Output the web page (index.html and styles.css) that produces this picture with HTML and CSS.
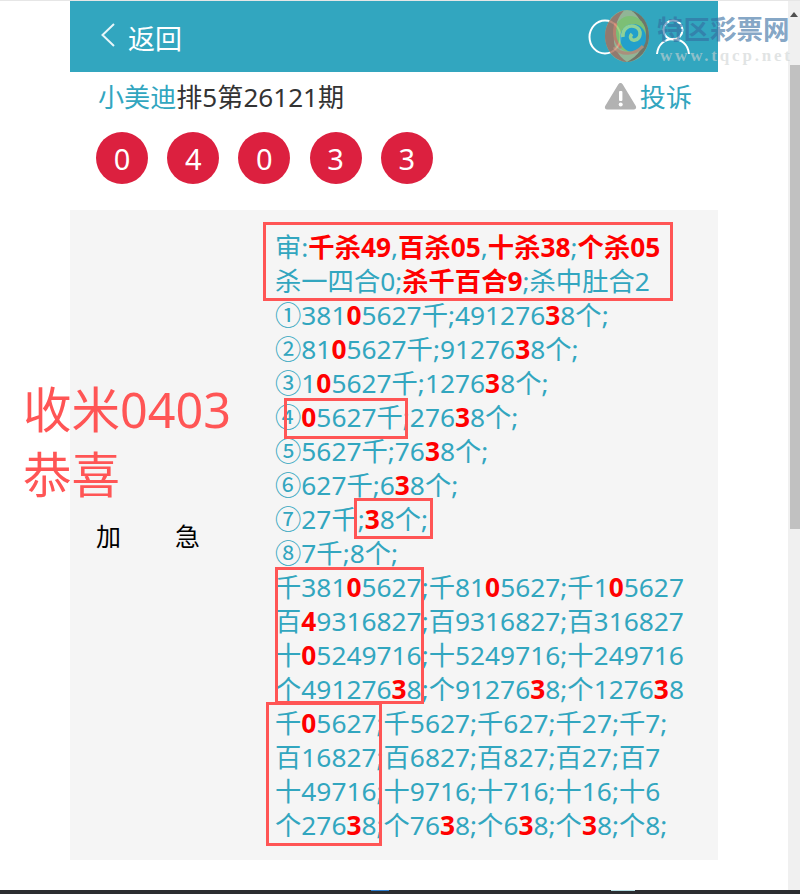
FILE: index.html
```html
<!DOCTYPE html>
<html lang="zh-CN">
<head>
    <meta charset="UTF-8">
    <meta name="viewport" content="width=device-width, initial-scale=1.0">
    <title>排5第26121期</title>
    <link rel="stylesheet" href="styles.css">
</head>
<body>
    <div class="top-line"></div>
    <div class="window">
        <div class="page">
            <div class="wrap">
                <header class="head">
                    <a class="back">
                        <svg class="back-icon" width="16" height="26" viewBox="0 0 16 26"><path d="M14 2 L2.500 13 L14 24" fill="none" stroke="#e8f6f9" stroke-width="2"/></svg>
                        <span class="back-text">返回</span>
                    </a>
                    <div class="head-icons">
                        <svg width="34" height="38" viewBox="0 0 34 38"><ellipse cx="17" cy="19" rx="15.500" ry="16.500" fill="none" stroke="#fff" stroke-width="2"/></svg>
                        <svg width="36" height="38" viewBox="0 0 36 38"><circle cx="18" cy="12" r="9.500" fill="none" stroke="#fff" stroke-width="2"/><path d="M2 36 C3 26 10 21 18 21 C26 21 33 26 34 36" fill="none" stroke="#fff" stroke-width="2"/></svg>
                    </div>
                </header>

                <div class="title-row">
                    <div class="title"><span class="author">小美迪</span>排5第26121期</div>
                    <a class="report">
                        <svg width="33" height="28" viewBox="0 0 33 28"><path d="M16.500 1 C17.500 1 18.300 1.600 18.800 2.500 L31.800 24 C32.800 25.800 31.600 27.500 29.800 27.500 L3.200 27.500 C1.400 27.500 .2 25.800 1.200 24 L14.200 2.500 C14.700 1.600 15.500 1 16.500 1 Z" fill="#b2b2b2"/><rect x="15" y="9" width="3.400" height="10" rx="1" fill="#fff"/><circle cx="16.700" cy="22.500" r="2" fill="#fff"/></svg>
                        投诉
                    </a>
                </div>

                <div class="balls">
                    <span class="ball">0</span>
                    <span class="ball">4</span>
                    <span class="ball">0</span>
                    <span class="ball">3</span>
                    <span class="ball">3</span>
                </div>

                <div class="post">
                    <div class="tag"><span>加</span><span>急</span></div>
                    <div class="lines">
                        <p>审:<b>千杀49</b>,<b>百杀05</b>,<b>十杀38</b>;<b>个杀05</b></p>
                        <p>杀一四合0;<b>杀千百合9</b>;杀中肚合2</p>
                        <p>①381<b>0</b>5627千;491276<b>3</b>8个;</p>
                        <p>②81<b>0</b>5627千;91276<b>3</b>8个;</p>
                        <p>③1<b>0</b>5627千;1276<b>3</b>8个;</p>
                        <p>④<b>0</b>5627千;276<b>3</b>8个;</p>
                        <p>⑤5627千;76<b>3</b>8个;</p>
                        <p>⑥627千;6<b>3</b>8个;</p>
                        <p>⑦27千;<b>3</b>8个;</p>
                        <p>⑧7千;8个;</p>
                        <p>千381<b>0</b>5627;千81<b>0</b>5627;千1<b>0</b>5627</p>
                        <p>百<b>4</b>9316827;百9316827;百316827</p>
                        <p>十<b>0</b>5249716;十5249716;十249716</p>
                        <p>个491276<b>3</b>8;个91276<b>3</b>8;个1276<b>3</b>8</p>
                        <p>千<b>0</b>5627;千5627;千627;千27;千7;</p>
                        <p>百16827;百6827;百827;百27;百7</p>
                        <p>十49716;十9716;十716;十16;十6</p>
                        <p>个276<b>3</b>8;个76<b>3</b>8;个6<b>3</b>8;个<b>3</b>8;个8;</p>
                    </div>
                </div>
            </div>

            <!-- stuff drawn on top of the screenshot -->
            <div class="note">收米0403<br>恭喜</div>
            <div class="mark mark-1"></div>
            <div class="mark mark-2"></div>
            <div class="mark mark-3"></div>
            <div class="mark mark-4"></div>
            <div class="mark mark-5"></div>

            <div class="watermark">
                <svg class="wm-logo" width="46" height="54" viewBox="0 0 46 54">
                    <ellipse cx="23" cy="27" rx="22" ry="26" fill="#a9b98c"/>
                    <path d="M27 1.500 C38 4 45 14 45 27 C45 41 35 52 23 53 C34 47 41 38 40 26 C39 14 34 6 27 1.500 Z" fill="#7e6a55"/>
                    <path d="M20 1.500 C9 4 1 15 1 27 C1 40 10 52 23 53 C13 46 9 37 10 27 C11 15 15 7 20 1.500 Z" fill="#a9705c"/>
                    <ellipse cx="26" cy="25" rx="16" ry="18" fill="#8fc663"/>
                    <ellipse cx="29" cy="29" rx="13" ry="14" fill="#1f9fd0"/>
                    <path d="M19 28 C18 19 26 15 32 18 C38 21 37 30 31 31 C27 32 25 28 28 25" fill="none" stroke="#a6dc8e" stroke-width="3.500"/>
                    <path d="M10 38 C17 47 31 46 39 37" fill="none" stroke="#c98a6c" stroke-width="3"/>
                    <path d="M12 14 C9 24 11 33 17 39" fill="none" stroke="#d8785c" stroke-width="3"/>
                </svg>
                <div class="wm-text">
                    <div class="wm-name">特区彩票网</div>
                    <div class="wm-url">www.tqcp.net</div>
                </div>
            </div>
        </div>

        <div class="scrollbar">
            <div class="scroll-arrow"></div>
            <div class="scroll-thumb"></div>
        </div>
    </div>
    <div class="taskbar">
        <span class="task task-blue"></span>
        <span class="task task-light"></span>
    </div>
</body>
</html>
```

FILE: styles.css
```css
* {
    box-sizing: border-box;
}
html, body {
    height: 100%;
}
body {
    margin: 0;
    display: flex;
    flex-direction: column;
    background-color: #fff;
    font-family: "Noto Sans", "Noto Sans CJK SC", sans-serif;
    overflow: hidden;
}
.top-line {
    height: 1px;
    background-color: #e6e6e6;
}
.window {
    flex: 1;
    display: flex;
    min-height: 0;
}
.page {
    flex: 1;
    position: relative;
}
.wrap {
    width: 648px;
    margin-left: 70px;
}

/* header */
.head {
    height: 71px;
    padding: 0 27px 0 30px;
    display: flex;
    justify-content: space-between;
    align-items: center;
    background-color: #32a6bf;
    color: #fff;
}
.back {
    display: flex;
    align-items: center;
    gap: 12px;
    font-size: 27px;
}
.back-icon {
    margin-top: -4px;
}
.back-text {
    margin-top: 2px;
}
.head-icons {
    display: flex;
    gap: 33px;
}

.title-row {
    height: 48px;
    padding: 0 26px 0 28px;
    display: flex;
    justify-content: space-between;
    align-items: center;
    font-size: 26.100px;
    color: #333;
}
.author {
    color: #32a6bf;
}
.report {
    display: flex;
    align-items: center;
    gap: 3px;
    color: #32a6bf;
}

.balls {
    margin-top: 12px;
    padding-left: 26px;
    display: flex;
    gap: 19.200px;
}
.ball {
    width: 52px;
    height: 52px;
    border-radius: 50%;
    display: flex;
    justify-content: center;
    align-items: center;
    background-color: #dc203f;
    color: #fff;
    font-size: 29px;
}

/* post body */
.post {
    margin-top: 26px;
    height: 650px;
    padding: 20px 0 18px;
    display: flex;
    align-items: center;
    background-color: #f5f5f5;
}
.tag {
    width: 205px;
    padding-left: 26px;
    display: flex;
    gap: 54px;
    font-size: 25px;
    line-height: 34px;
    color: #000;
}
.lines {
    flex: 1;
    font-size: 26.300px;
    line-height: 34px;
    color: #32a6bf;
    white-space: nowrap;
}
.lines p {
    margin: 0;
}
.lines b {
    color: #f00;
}

/* overlays */
.note {
    position: absolute;
    left: 23px;
    top: 376px;
    font-size: 48.500px;
    line-height: 65px;
    color: #f55;
}
.mark {
    position: absolute;
    border: 3px solid #f55;
}
.mark-1 {
    left: 263px;
    top: 221px;
    width: 410px;
    height: 79px;
}
.mark-2 {
    left: 284px;
    top: 397px;
    width: 124px;
    height: 41px;
}
.mark-3 {
    left: 354px;
    top: 497px;
    width: 79px;
    height: 41px;
}
.mark-4 {
    left: 275px;
    top: 566px;
    width: 149px;
    height: 137px;
}
.mark-5 {
    left: 266px;
    top: 701px;
    width: 116px;
    height: 144px;
}

.watermark {
    position: absolute;
    z-index: 1;
    left: 604px;
    top: 8px;
    display: flex;
    gap: 7px;
    white-space: nowrap;
}
.wm-logo {
    opacity: .8;
}
.wm-name {
    margin-top: 5px;
    font-size: 26.500px;
    line-height: 30px;
    font-weight: bold;
    color: rgba(52, 108, 160, .62);
}
.wm-url {
    margin-top: 2px;
    padding-left: 3px;
    font-family: "Liberation Serif", serif;
    font-size: 17px;
    line-height: 19px;
    font-weight: bold;
    letter-spacing: 2.800px;
    color: rgba(205, 210, 210, .6);
}

/* fake window bits */
.scrollbar {
    width: 12px;
    position: relative;
    background-color: #f0f0f0;
}
.scroll-arrow {
    position: absolute;
    left: 2px;
    top: 11px;
    border-left: 4px solid transparent;
    border-right: 4px solid transparent;
    border-bottom: 5px solid #505050;
}
.scroll-thumb {
    position: absolute;
    left: 2px;
    right: 0;
    top: 64px;
    height: 464px;
    background-color: #c1c1c1;
}
.taskbar {
    height: 4px;
    position: relative;
    background-color: #2b2d30;
}
.task {
    position: absolute;
    top: 0;
    height: 1px;
}
.task-blue {
    left: 371px;
    width: 18px;
    background-color: #2f7fd0;
}
.task-light {
    left: 611px;
    width: 24px;
    background-color: #b5dde2;
}
```
